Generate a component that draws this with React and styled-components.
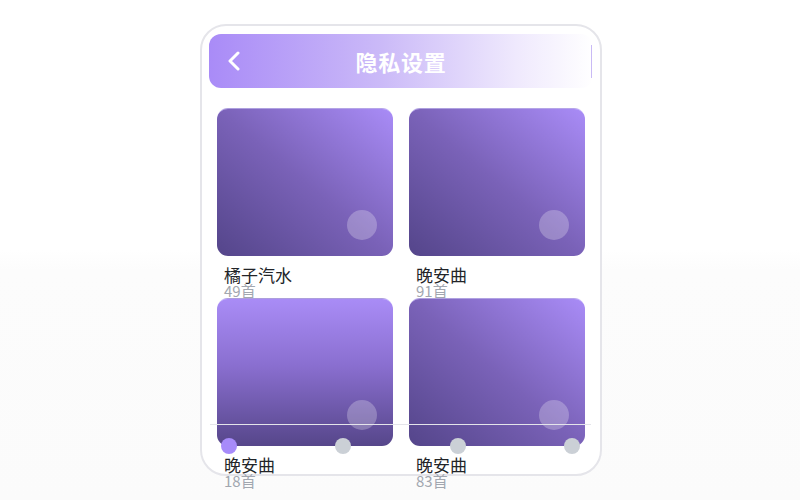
import React from "react";
import styled, { createGlobalStyle } from "styled-components";

const GlobalStyle = createGlobalStyle`
  html, body { margin: 0; padding: 0; }
  html {
    min-height: 100%;
    background: linear-gradient(to bottom, #ffffff 0, #ffffff 250px, #fcfcfc 270px, #fbfbfb 100%);
  }
  body {
    font-family: "Noto Sans CJK SC", "Noto Sans", sans-serif;
    background: transparent;
  }
`;

const Page = styled.div`
  display: flex;
  justify-content: center;
  padding: 24px 0 24px 2px;
`;

const Phone = styled.div`
  position: relative;
  box-sizing: border-box;
  width: 402px;
  height: 452px;
  border: 2px solid #e5e5ea;
  border-radius: 26px;
  background: #ffffff;
  padding: 8px 7px;
`;

const Header = styled.div`
  position: relative;
  height: 54px;
  border-radius: 12px;
  background: linear-gradient(to right, #a98bf7 0%, #cbbaf8 45%, #efe9fd 80%, #ffffff 100%);
  display: flex;
  align-items: center;
  justify-content: center;

  &::after {
    content: "";
    position: absolute;
    right: 1px;
    top: 11px;
    bottom: 10px;
    width: 1px;
    background: #c9baf5;
  }
`;

const BackButton = styled.button`
  position: absolute;
  left: 18px;
  top: 50%;
  transform: translateY(-50%);
  display: flex;
  padding: 0;
  border: 0;
  background: none;
`;

const Title = styled.h1`
  margin: 0;
  font-size: 22px;
  font-weight: 700;
  color: #ffffff;
  letter-spacing: 0.8px;
`;

const Grid = styled.div`
  display: grid;
  grid-template-columns: 1fr 1fr;
  column-gap: 16px;
  padding: 20px 8px 0;
`;

const Item = styled.div`
  display: flex;
  flex-direction: column;
`;

const Cover = styled.div`
  position: relative;
  box-sizing: border-box;
  height: 148px;
  border-radius: 11px;
  border-top: 1px solid rgba(210, 196, 255, 0.7);
  background: ${(p) =>
    p.$vertical
      ? "linear-gradient(to bottom, #a98cf6 0%, #8a6fd0 45%, #56468a 100%)"
      : "linear-gradient(to top right, #54458a 0%, #7a62b8 50%, #a98cf7 100%)"};
`;

const PlayDot = styled.span`
  position: absolute;
  right: 16px;
  bottom: 16px;
  width: 30px;
  height: 30px;
  border-radius: 50%;
  background: rgba(255, 255, 255, 0.25);
`;

const Caption = styled.div`
  height: 42px;
  padding: 9px 0 0 7px;
  box-sizing: border-box;
`;

const Name = styled.div`
  font-size: 17px;
  line-height: 20px;
  color: #222428;
`;

const Count = styled.div`
  font-size: 15px;
  line-height: 12px;
  color: #a2a7b0;
`;

const Track = styled.div`
  position: absolute;
  left: 8px;
  right: 9px;
  top: 398px;
  height: 1px;
  background: #e4e4ea;
`;

const Dots = styled.div`
  position: absolute;
  left: 19px;
  right: 20px;
  top: 412px;
  display: flex;
  justify-content: space-between;
`;

const Dot = styled.span`
  width: 16px;
  height: 16px;
  border-radius: 50%;
  background: ${(p) => (p.$active ? "#a78bfa" : "#cbd0d6")};
`;

const items = [
  { name: "橘子汽水", count: "49首" },
  { name: "晚安曲", count: "91首" },
  { name: "晚安曲", count: "18首", vertical: true },
  { name: "晚安曲", count: "83首" },
];

export default function App() {
  return (
    <>
      <GlobalStyle />
      <Page>
        <Phone>
          <Header>
            <BackButton aria-label="返回">
              <svg width="14" height="20" viewBox="0 0 14 20" fill="none">
                <path d="M11 2 L3 10 L11 18" stroke="#ffffff" strokeWidth="3" strokeLinecap="round" strokeLinejoin="round" />
              </svg>
            </BackButton>
            <Title>隐私设置</Title>
          </Header>
          <Grid>
            {items.map((it, i) => (
              <Item key={i}>
                <Cover $vertical={it.vertical}>
                  <PlayDot />
                </Cover>
                <Caption>
                  <Name>{it.name}</Name>
                  <Count>{it.count}</Count>
                </Caption>
              </Item>
            ))}
          </Grid>
          <Track />
          <Dots>
            <Dot $active />
            <Dot />
            <Dot />
            <Dot />
          </Dots>
        </Phone>
      </Page>
    </>
  );
}
